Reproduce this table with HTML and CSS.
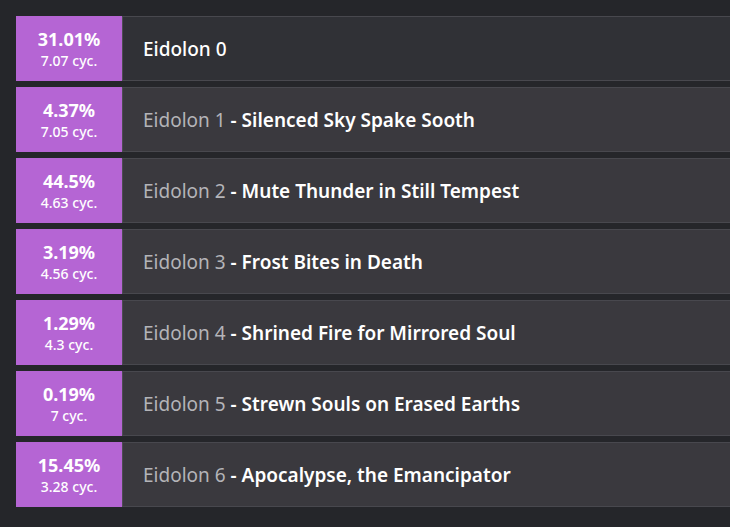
FILE: index.html
```html
<!DOCTYPE html>
<html>
<head>
<meta charset="utf-8">
<link rel="stylesheet" href="styles.css">
</head>
<body>
<div class="list">
  <div class="row active">
    <div class="badge"><div class="pct">31.01%</div><div class="cyc">7.07 cyc.</div></div>
    <div class="info"><span class="lvl">Eidolon 0</span></div>
  </div>
  <div class="row">
    <div class="badge"><div class="pct">4.37%</div><div class="cyc">7.05 cyc.</div></div>
    <div class="info"><span class="lvl">Eidolon 1</span><span class="name">- Silenced Sky Spake Sooth</span></div>
  </div>
  <div class="row">
    <div class="badge"><div class="pct">44.5%</div><div class="cyc">4.63 cyc.</div></div>
    <div class="info"><span class="lvl">Eidolon 2</span><span class="name">- Mute Thunder in Still Tempest</span></div>
  </div>
  <div class="row">
    <div class="badge"><div class="pct">3.19%</div><div class="cyc">4.56 cyc.</div></div>
    <div class="info"><span class="lvl">Eidolon 3</span><span class="name">- Frost Bites in Death</span></div>
  </div>
  <div class="row">
    <div class="badge"><div class="pct">1.29%</div><div class="cyc">4.3 cyc.</div></div>
    <div class="info"><span class="lvl">Eidolon 4</span><span class="name">- Shrined Fire for Mirrored Soul</span></div>
  </div>
  <div class="row">
    <div class="badge"><div class="pct">0.19%</div><div class="cyc">7 cyc.</div></div>
    <div class="info"><span class="lvl">Eidolon 5</span><span class="name">- Strewn Souls on Erased Earths</span></div>
  </div>
  <div class="row">
    <div class="badge"><div class="pct">15.45%</div><div class="cyc">3.28 cyc.</div></div>
    <div class="info"><span class="lvl">Eidolon 6</span><span class="name">- Apocalypse, the Emancipator</span></div>
  </div>
</div>
</body>
</html>
```

FILE: styles.css
```css
html, body {
  margin: 0;
  padding: 0;
  background: #25262a;
  overflow: hidden;
}
body {
  padding: 16px 0 0 16px;
  font-family: "Noto Sans", "DejaVu Sans", sans-serif;
  color: #ffffff;
}
.list {
  display: flex;
  flex-direction: column;
  gap: 6px;
  width: 730px;
}
.row {
  display: flex;
  height: 65px;
}
.badge {
  width: 106px;
  flex: none;
  background: #b565d4;
  display: flex;
  flex-direction: column;
  align-items: center;
  justify-content: center;
  color: #ffffff;
}
.pct {
  font-size: 18px;
  font-weight: 700;
  line-height: 24px;
}
.cyc {
  font-size: 14px;
  font-weight: 500;
  line-height: 19px;
}
.info {
  flex: 1;
  background: #3a393e;
  border-top: 1px solid #48484e;
  border-bottom: 1px solid #48484e;
  border-left: 1px solid #4c4c52;
  display: flex;
  align-items: center;
  padding-left: 20px;
  font-size: 19px;
  font-weight: 500;
}
.row.active .info {
  background: #303136;
}
.lvl {
  color: #b4b4b8;
  font-weight: 400;
  margin-right: 5px;
}
.row.active .lvl {
  color: #ffffff;
  font-weight: 500;
}
.name {
  color: #ffffff;
  font-weight: 600;
}
```
